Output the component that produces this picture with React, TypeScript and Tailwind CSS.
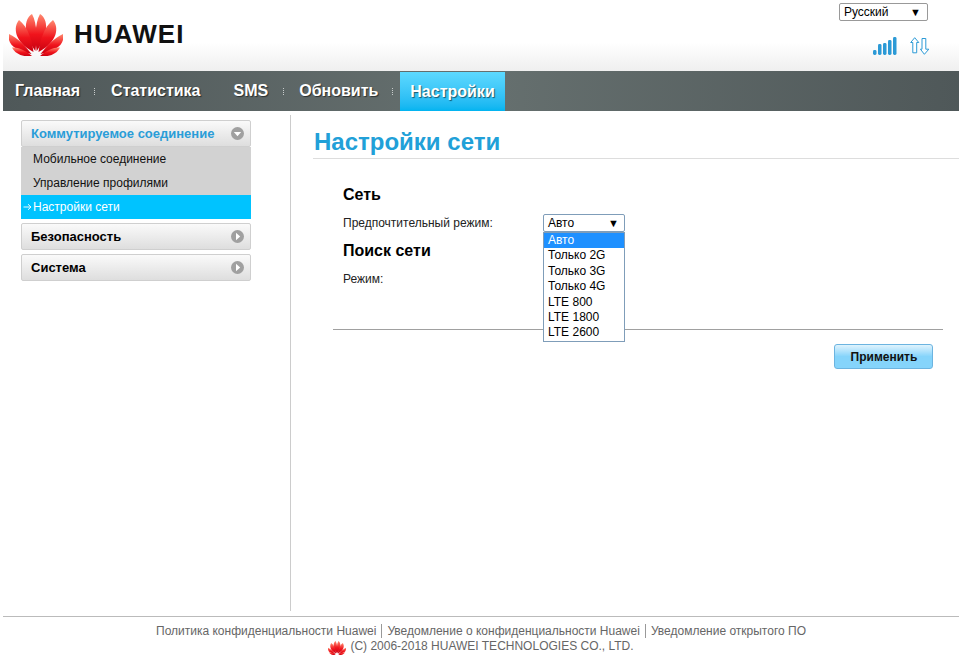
const dropdownOptions = ["Авто", "Только 2G", "Только 3G", "Только 4G", "LTE 800", "LTE 1800", "LTE 2600"];

function Petals() {
  const left = [
    "M35.3 51 C37 40 37.5 24 32 14 C24 19 22.5 34 35.3 51 Z",
    "M33.5 52 C32 40 28 27 19 20 C13 27 14 42 33.5 52 Z",
    "M31.5 54 C25 46 18 38 9 34 C6.5 45 17 51 31.5 54 Z",
    "M32 56 C25 50 18 47 12 47.5 C15 54 24 57.5 32 56 Z",
  ];
  return (
    <>
      <defs>
        <linearGradient id="petal" x1="0" y1="0" x2="0" y2="1">
          <stop offset="0" stopColor="#ff8a70" />
          <stop offset="0.55" stopColor="#f0141c" />
          <stop offset="1" stopColor="#c80010" />
        </linearGradient>
      </defs>
      {left.map((d) => (
        <g key={d}>
          <path d={d} fill="url(#petal)" />
          <path d={d} fill="url(#petal)" transform="matrix(-1 0 0 1 72 0)" />
        </g>
      ))}
    </>
  );
}

function Header() {
  return (
    <div className="h-[71px] flex justify-between bg-gradient-to-b from-white from-60% to-[#efefef] shrink-0">
      <div className="flex items-center pl-[6px] pb-[1px]">
        <svg width="54" height="42" viewBox="9 14 54 42" className="mt-[-1px]">
          <Petals />
        </svg>
        <span className="ml-[11px] mt-[-2px] text-[26px] leading-none font-bold tracking-[1.1px] text-[#111]">HUAWEI</span>
      </div>
      <div className="flex flex-col items-end pr-[31px] pt-[3px]">
        <div className="w-[89px] h-[18px] border border-[#999] rounded-[2px] bg-white flex items-center justify-between pl-[4px] pr-[6px] text-[12px] text-black">
          <span>Русский</span>
          <span className="text-[11px] leading-none">▼</span>
        </div>
        <div className="flex items-start mt-[16px] mr-[-2px]">
          <svg width="25" height="18" viewBox="0 0 25 18">
            {[
              [0, 13],
              [5, 7],
              [10, 6],
              [15, 3],
              [20, 0],
            ].map(([x, y]) => (
              <rect key={x} x={x} y={y} width="3.5" height={18 - y} rx="1.4" fill="#2c9ad6" />
            ))}
          </svg>
          <svg width="20" height="18" viewBox="0 0 20 18" className="ml-[12px]" fill="#fff" stroke="#2c9ad6" strokeWidth="1">
            <path d="M4.7 0.7 L8.8 5.5 H6.7 V15.8 H2.8 V5.5 H0.7 Z" />
            <path d="M12 1.5 H15.8 V12.2 H18.8 L14.4 17.3 L10.4 12.2 H12 Z" />
          </svg>
        </div>
      </div>
    </div>
  );
}

function NavSep({ className }: { className: string }) {
  return <span className={`h-[7px] border-l border-dotted border-[#c8cccc] ${className}`} />;
}

function Nav() {
  const label = "text-[16px] font-bold text-white [text-shadow:1px_1px_1px_rgba(0,0,0,0.55)]";
  return (
    <div className="h-10 shrink-0 flex items-center bg-gradient-to-r from-[#4f5859] via-[#66706f] to-[#4f5859]">
      <span className={`${label} ml-3`}>Главная</span>
      <NavSep className="ml-[14px]" />
      <span className={`${label} ml-4`}>Статистика</span>
      <span className={`${label} ml-[33px]`}>SMS</span>
      <NavSep className="ml-[15px]" />
      <span className={`${label} ml-[15px]`}>Обновить</span>
      <NavSep className="ml-[14px]" />
      <span className={`${label} ml-[7px] h-[39px] mt-px flex items-center px-[10px] bg-gradient-to-b from-[#5cd9ff] to-[#00b4f0]`}>Настройки</span>
    </div>
  );
}

function SideHead({ title, open }: { title: string; open?: boolean }) {
  return (
    <div className="h-[27px] border border-[#cfcfcf] rounded-[2px] bg-gradient-to-b from-[#fafafa] to-[#dedede] flex items-center justify-between pl-[9px] pr-[6px]">
      <span className={`text-[13px] font-bold ${open ? "text-[#2a9dd8]" : "text-black"}`}>{title}</span>
      <svg width="13" height="13" viewBox="0 0 13 13">
        <circle cx="6.5" cy="6.5" r="6.5" fill="#a0a0a0" />
        <path d={open ? "M2.8 5 H10.2 L6.5 9.2 Z" : "M5 2.8 L9.2 6.5 L5 10.2 Z"} fill="#fff" />
      </svg>
    </div>
  );
}

function Sidebar() {
  return (
    <div className="w-[230px] ml-[18px] mt-[9px] shrink-0">
      <SideHead title="Коммутируемое соединение" open />
      <div className="bg-[#d2d2d2] text-[12px] text-[#111]">
        <div className="h-[24px] flex items-center pl-3">Мобильное соединение</div>
        <div className="h-[24px] flex items-center pl-3">Управление профилями</div>
        <div className="h-[24px] flex items-center bg-[#00c3ff] text-white pl-[2px]">
          <svg width="10" height="8" viewBox="0 0 10 8" fill="none" stroke="#fff" strokeWidth="0.9">
            <path d="M0.5 4 H7.5 M5 1.2 L8 4 L5 6.8" />
          </svg>
          <span>Настройки сети</span>
        </div>
      </div>
      <div className="mt-[4px]">
        <SideHead title="Безопасность" />
      </div>
      <div className="mt-[4px]">
        <SideHead title="Система" />
      </div>
    </div>
  );
}

function ModeSelect() {
  return (
    <div className="relative w-[82px] h-[18px] ml-[50px] border border-[#7f9db9] rounded-[2px] bg-white flex items-center justify-between pl-[4px] pr-[5px] text-[12px] text-black">
      <span>Авто</span>
      <span className="text-[11px] leading-none">▼</span>
      <div className="absolute left-[-1px] top-[17px] w-[82px] h-[110px] border border-[#7f9db9] bg-white">
        {dropdownOptions.map((option, i) => (
          <div key={option} className={`h-[15.4px] leading-[15.4px] pl-[4px] ${i === 0 ? "bg-[#1e90ff] text-white" : "text-black"}`}>
            {option}
          </div>
        ))}
      </div>
    </div>
  );
}

function Content() {
  return (
    <div className="flex-1 mt-[4px] border-l border-[#cccccc] h-[496px]">
      <div className="ml-[22px] h-[44px] border-b border-[#dddddd] pl-px pt-[12px] text-[24px] leading-[30px] font-bold text-[#21a0d8]">
        Настройки сети
      </div>
      <div className="ml-[42px] mr-[16px]">
        <div className="pl-[10px]">
          <div className="mt-[26px] h-[20px] text-[16px] leading-[20px] font-bold text-black">Сеть</div>
          <div className="mt-[9px] h-[18px] flex items-center text-[12px] text-[#222]">
            <span className="w-[150px]">Предпочтительный режим:</span>
            <ModeSelect />
          </div>
          <div className="mt-[9px] h-[20px] text-[16px] leading-[20px] font-bold text-black">Поиск сети</div>
          <div className="mt-[10px] h-[16px] text-[12px] leading-[16px] text-[#222]">Режим:</div>
        </div>
        <div className="mt-[42px] border-t border-[#a0a0a0]" />
        <div className="flex justify-end pr-[10px] mt-[14px]">
          <button className="w-[99px] h-[25px] pl-px border border-[#6cb4e0] rounded-[3px] bg-gradient-to-b from-[#dff3fd] to-[#85d4fb] to-50% text-[12px] font-bold text-[#111]">
            Применить
          </button>
        </div>
      </div>
    </div>
  );
}

function Footer() {
  const sep = "border-l border-[#999] h-[14px] mx-[5px]";
  return (
    <div className="mt-[5px] border-t border-[#bbbbbb] text-[12px] text-[#666] pt-[6px]">
      <div className="h-[15px] flex items-center justify-center">
        <span>Политика конфиденциальности Huawei</span>
        <span className={sep} />
        <span>Уведомление о конфиденциальности Huawei</span>
        <span className={sep} />
        <span>Уведомление открытого ПО</span>
      </div>
      <div className="h-[15px] flex items-center justify-center">
        <svg width="18" height="14" viewBox="9 14 54 42" className="mt-[4px] mr-[4px]">
          <Petals />
        </svg>
        <span>(C) 2006-2018 HUAWEI TECHNOLOGIES CO., LTD.</span>
      </div>
    </div>
  );
}

export default function App() {
  return (
    <div className="w-[962px] h-[664px] bg-white overflow-hidden px-[3px] font-['Liberation_Sans',Arial,sans-serif]">
      <Header />
      <Nav />
      <div className="flex">
        <Sidebar />
        <div className="w-[39px] shrink-0" />
        <Content />
      </div>
      <Footer />
    </div>
  );
}
